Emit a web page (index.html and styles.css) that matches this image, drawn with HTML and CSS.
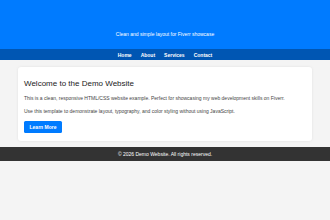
FILE: index.html
```html
<!DOCTYPE html>
<html lang="en">
<head>
<meta charset="utf-8">
<title>Demo Website</title>
<link rel="stylesheet" href="styles.css">
</head>
<body>
<header class="site-header">
  <p class="tagline">Clean and simple layout for Fiverr showcase</p>
</header>
<nav class="site-nav">
  <a href="#">Home</a>
  <a href="#">About</a>
  <a href="#">Services</a>
  <a href="#">Contact</a>
</nav>
<main class="content">
  <section class="card">
    <h2 class="card-title">Welcome to the Demo Website</h2>
    <p class="card-text">This is a clean, responsive HTML/CSS website example. Perfect for showcasing my web development skills on Fiverr.</p>
    <p class="card-text">Use this template to demonstrate layout, typography, and color styling without using JavaScript.</p>
    <a class="btn" href="#">Learn More</a>
  </section>
</main>
<footer class="site-footer">© 2026 Demo Website. All rights reserved.</footer>
</body>
</html>
```
FILE: styles.css
```css
html, body {
  margin: 0;
  padding: 0;
}
body {
  background: #f4f4f4;
  font-family: "Liberation Sans", Arial, sans-serif;
  color: #333;
}
.site-header {
  background: #007bff;
  height: 49px;
  box-sizing: border-box;
  padding-top: 31px;
  text-align: center;
}
.tagline {
  margin: 0;
  color: #fff;
  font-size: 5px;
  line-height: 6px;
}
.site-nav {
  background: #0056b3;
  height: 11px;
  display: flex;
  justify-content: center;
  align-items: center;
  gap: 9px;
}
.site-nav a {
  color: #fff;
  text-decoration: none;
  font-weight: bold;
  font-size: 5px;
  line-height: 6px;
}
.content {
  padding: 7px 18px 0;
}
.card {
  background: #fff;
  border-radius: 3px;
  box-shadow: 0 0 3px rgba(0, 0, 0, 0.08);
  padding: 12px 6px 8px;
}
.card-title {
  margin: 0 0 6px;
  font-size: 8px;
  line-height: 10px;
  font-weight: normal;
  color: #222;
}
.card-text {
  margin: 0 0 7px;
  font-size: 5px;
  line-height: 6px;
  color: #444;
}
.btn {
  display: flex;
  align-items: center;
  justify-content: center;
  margin-top: 3px;
  width: 38px;
  height: 12px;
  background: #007bff;
  color: #fff;
  border-radius: 1.5px;
  font-size: 5px;
  font-weight: bold;
  text-decoration: none;
}
.site-footer {
  margin-top: 6px;
  background: #333;
  color: #fff;
  height: 14px;
  display: flex;
  align-items: center;
  justify-content: center;
  font-size: 5px;
}
```
